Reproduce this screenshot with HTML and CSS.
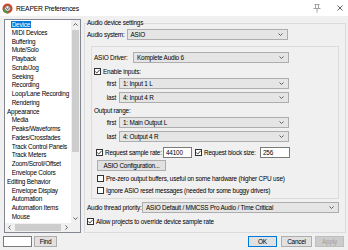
FILE: index.html
```html
<!DOCTYPE html>
<html lang="en">
<head>
    <meta charset="UTF-8">
    <title>REAPER Preferences</title>
    <link rel="stylesheet" href="styles.css">
</head>
<body>
    <div class="window">
        <div class="titlebar">
            <svg class="app-icon" width="11" height="11" viewBox="0 0 11 11">
                <circle cx="5.5" cy="5.5" r="5" fill="#d5482b"/>
                <path d="M0.6 6.4 A5 5 0 0 0 6.4 10.4 L5.5 5.5 Z" fill="#4f9a3a"/>
                <circle cx="5.5" cy="5.5" r="2.8" fill="#f4f4f4" stroke="#555" stroke-width="0.8"/>
                <path d="M4 4.3 L5.5 6.8 L7 4.3" fill="none" stroke="#444" stroke-width="0.8"/>
            </svg>
            <span class="title">REAPER Preferences</span>
            <svg class="pin" width="8" height="9" viewBox="0 0 8 9">
                <path d="M1.5 0.5 H6.5 M2.5 0.5 V4.5 M5.5 0.5 V4.5 M0.5 4.5 H7.5 M4 4.5 V8.5" fill="none" stroke="#a0a0a0"/>
            </svg>
            <svg class="close" width="6" height="6" viewBox="0 0 6 6">
                <path d="M0.5 0.5 L5.5 5.5 M5.5 0.5 L0.5 5.5" stroke="#333" stroke-width="0.8"/>
            </svg>
        </div>

        <div class="main">
            <!-- liste -->
            <div class="tree">
                <div class="tree-items">
                    <div class="item"><span class="sel">Device</span></div>
                    <div class="item">MIDI Devices</div>
                    <div class="item">Buffering</div>
                    <div class="item">Mute/Solo</div>
                    <div class="item">Playback</div>
                    <div class="item">Scrub/Jog</div>
                    <div class="item">Seeking</div>
                    <div class="item">Recording</div>
                    <div class="item">Loop/Lane Recording</div>
                    <div class="item">Rendering</div>
                    <div class="item top">Appearance</div>
                    <div class="item">Media</div>
                    <div class="item">Peaks/Waveforms</div>
                    <div class="item">Fades/Crossfades</div>
                    <div class="item">Track Control Panels</div>
                    <div class="item">Track Meters</div>
                    <div class="item">Zoom/Scroll/Offset</div>
                    <div class="item">Envelope Colors</div>
                    <div class="item top">Editing Behavior</div>
                    <div class="item">Envelope Display</div>
                    <div class="item">Automation</div>
                    <div class="item">Automation Items</div>
                    <div class="item">Mouse</div>
                </div>
                <div class="vscroll">
                    <div class="arrow"><svg width="5" height="3"><path d="M0.5 2.5 L2.5 0.5 L4.5 2.5" fill="none" stroke="#606060"/></svg></div>
                    <div class="vtrack"><div class="vthumb"></div></div>
                    <div class="arrow"><svg width="5" height="3"><path d="M0.5 0.5 L2.5 2.5 L4.5 0.5" fill="none" stroke="#606060"/></svg></div>
                </div>
                <div class="hscroll">
                    <div class="arrow"><svg width="3" height="5"><path d="M2.5 0.5 L0.5 2.5 L2.5 4.5" fill="none" stroke="#606060"/></svg></div>
                    <div class="htrack"><div class="hthumb"></div></div>
                    <div class="arrow"><svg width="3" height="5"><path d="M0.5 0.5 L2.5 2.5 L0.5 4.5" fill="none" stroke="#606060"/></svg></div>
                </div>
                <div class="corner"></div>
            </div>

            <!-- ayarlar -->
            <fieldset class="group">
                <legend>Audio device settings</legend>

                <div class="row system-row">
                    <span class="system-label">Audio system:</span>
                    <div class="combo system-combo"><span>ASIO</span><svg width="5" height="3"><path d="M0.5 0.5 L2.5 2.5 L4.5 0.5" fill="none" stroke="#606060"/></svg></div>
                </div>

                <div class="asio">
                    <div class="row driver-row">
                        <span class="driver-label">ASIO Driver:</span>
                        <div class="combo driver-combo"><span>Komplete Audio 6</span><svg width="5" height="3"><path d="M0.5 0.5 L2.5 2.5 L4.5 0.5" fill="none" stroke="#606060"/></svg></div>
                    </div>

                    <div class="row check-row enable-row">
                        <span class="cb"><svg width="7" height="7"><path d="M1.3 3.6 L2.8 5 L5.7 1.8" fill="none" stroke="#222" stroke-width="0.9"/></svg></span>
                        <span class="cb-text">Enable inputs:</span>
                    </div>
                    <div class="row range-row gap-2">
                        <span class="range-label">first</span>
                        <div class="combo range-combo"><span>1: Input 1 L</span><svg width="5" height="3"><path d="M0.5 0.5 L2.5 2.5 L4.5 0.5" fill="none" stroke="#606060"/></svg></div>
                    </div>
                    <div class="row range-row gap-3">
                        <span class="range-label">last</span>
                        <div class="combo range-combo"><span>4: Input 4 R</span><svg width="5" height="3"><path d="M0.5 0.5 L2.5 2.5 L4.5 0.5" fill="none" stroke="#606060"/></svg></div>
                    </div>

                    <div class="row text-row output-row">Output range:</div>
                    <div class="row range-row gap-2">
                        <span class="range-label">first</span>
                        <div class="combo range-combo"><span>1: Main Output L</span><svg width="5" height="3"><path d="M0.5 0.5 L2.5 2.5 L4.5 0.5" fill="none" stroke="#606060"/></svg></div>
                    </div>
                    <div class="row range-row gap-3">
                        <span class="range-label">last</span>
                        <div class="combo range-combo"><span>4: Output 4 R</span><svg width="5" height="3"><path d="M0.5 0.5 L2.5 2.5 L4.5 0.5" fill="none" stroke="#606060"/></svg></div>
                    </div>

                    <div class="row request-row">
                        <span class="cb"><svg width="7" height="7"><path d="M1.3 3.6 L2.8 5 L5.7 1.8" fill="none" stroke="#222" stroke-width="0.9"/></svg></span>
                        <span class="rate-label">Request sample rate:</span>
                        <input class="field rate-field" type="text" value="44100">
                        <span class="cb block-cb"><svg width="7" height="7"><path d="M1.3 3.6 L2.8 5 L5.7 1.8" fill="none" stroke="#222" stroke-width="0.9"/></svg></span>
                        <span class="block-label">Request block size:</span>
                        <input class="field block-field" type="text" value="256">
                    </div>

                    <div class="row config-row">
                        <button class="btn config-btn">ASIO Configuration...</button>
                    </div>

                    <div class="row check-row option-row">
                        <span class="cb"></span>
                        <span class="cb-text">Pre-zero output buffers, useful on some hardware (higher CPU use)</span>
                    </div>
                    <div class="row check-row option-row">
                        <span class="cb"></span>
                        <span class="cb-text">Ignore ASIO reset messages (needed for some buggy drivers)</span>
                    </div>
                </div>

                <div class="row thread-row">
                    <span class="thread-label">Audio thread priority:</span>
                    <div class="combo thread-combo"><span>ASIO Default / MMCSS Pro Audio / Time Critical</span><svg width="5" height="3"><path d="M0.5 0.5 L2.5 2.5 L4.5 0.5" fill="none" stroke="#606060"/></svg></div>
                </div>
                <div class="row check-row allow-row">
                    <span class="cb"><svg width="7" height="7"><path d="M1.3 3.6 L2.8 5 L5.7 1.8" fill="none" stroke="#222" stroke-width="0.9"/></svg></span>
                    <span class="cb-text">Allow projects to override device sample rate</span>
                </div>
            </fieldset>
        </div>

        <div class="footer">
            <input class="field search-field" type="text" value="">
            <button class="btn find-btn">Find</button>
            <span class="spacer"></span>
            <button class="btn ok-btn">OK</button>
            <button class="btn cancel-btn">Cancel</button>
            <button class="btn apply-btn" disabled>Apply</button>
        </div>
    </div>
</body>
</html>
```

FILE: styles.css
```css
body {
    margin: 0;
    font-family: "Liberation Sans", Arial, sans-serif;
    font-size: 6.4px;
    letter-spacing: -0.2px;
    color: #000;
    background-color: #f0f0f0;
}

.window {
    width: 348px;
    height: 250px;
    display: flex;
    flex-direction: column;
    overflow: hidden;
}

/* Başlık çubuğu */
.titlebar {
    height: 16px;
    flex-shrink: 0;
    display: flex;
    align-items: center;
    padding-left: 2px;
    background-color: #fff;
}

.app-icon {
    margin-right: 3px;
}

.title {
    flex: 1;
    font-size: 6.8px;
}

.pin {
    margin-right: 16px;
}

.close {
    margin-right: 5px;
}

.main {
    display: flex;
    gap: 3px;
    padding: 3px 2px 0 4px;
}

/* Sol liste */
.tree {
    width: 77px;
    height: 214px;
    box-sizing: border-box;
    flex-shrink: 0;
    border: 1px solid #828790;
    background-color: #fff;
    display: grid;
    grid-template-columns: 1fr 9px;
    grid-template-rows: 1fr 9px;
}

.tree-items {
    overflow: hidden;
}

.item {
    height: 8.77px;
    line-height: 8.77px;
    padding-left: 6.7px;
    white-space: nowrap;
}

.item.top {
    padding-left: 2px;
}

.sel {
    display: inline-block;
    height: 7px;
    line-height: 7px;
    padding: 0 1px;
    margin-left: -1px;
    vertical-align: middle;
    background-color: #0078d7;
    color: #fff;
}

.vscroll {
    display: flex;
    flex-direction: column;
    background-color: #f0f0f0;
}

.hscroll {
    display: flex;
    background-color: #f0f0f0;
}

.arrow {
    width: 9px;
    height: 9px;
    flex-shrink: 0;
    display: flex;
    align-items: center;
    justify-content: center;
}

.vtrack {
    flex: 1;
    padding: 1px 1px 0;
}

.vthumb {
    height: 122px;
    background-color: #cdcdcd;
}

.htrack {
    flex: 1;
    padding: 1px 1px;
}

.hthumb {
    height: 100%;
    background-color: #cdcdcd;
}

.corner {
    background-color: #f0f0f0;
}

/* Sağ grup kutusu */
.group {
    flex: 1;
    min-width: 0;
    margin: 0;
    padding: 0 2px;
    border: 1px solid #dcdcdc;
}

.group legend {
    padding: 0;
    line-height: 8px;
}

.row {
    display: flex;
    align-items: center;
    height: 11px;
    white-space: nowrap;
}

.check-row,
.text-row {
    height: 9px;
}

.combo {
    height: 11px;
    box-sizing: border-box;
    display: flex;
    align-items: center;
    justify-content: space-between;
    padding: 0 4px 0 3px;
    border: 1px solid #adadad;
    background-color: #e5e5e5;
}

.system-row {
    width: 201px;
    margin-top: 2px;
}

.system-label {
    flex-shrink: 0;
    margin-right: 2px;
}

.system-combo {
    flex: 1;
}

.asio {
    width: 248px;
    box-sizing: border-box;
    margin: 6px 0 0 4px;
    padding: 5px 0 3px 1px;
    border: 1px solid #dcdcdc;
}

.driver-label {
    width: 39px;
    margin-left: 1px;
}

.driver-combo {
    width: 156px;
}

.cb {
    width: 7px;
    height: 7px;
    box-sizing: border-box;
    flex-shrink: 0;
    border: 1px solid #333;
    background-color: #fff;
    display: flex;
}

.cb svg {
    margin: -1px;
}

.cb-text {
    margin-left: 2px;
}

.enable-row {
    margin-top: 3px;
    margin-left: 1px;
    height: 10px;
}

.gap-2 {
    margin-top: 2px;
}

.gap-3 {
    margin-top: 3px;
}

.range-label {
    width: 23px;
    margin-right: 3px;
    text-align: right;
}

.range-combo {
    width: 170px;
}

.output-row {
    margin-top: 3px;
    padding-left: 1px;
}

.request-row {
    margin-top: 5px;
    padding-left: 3px;
}

.rate-label {
    width: 58px;
    margin-left: 2px;
}

.field {
    height: 11px;
    box-sizing: border-box;
    margin: 0;
    padding: 0 2px;
    border: 1px solid #7a7a7a;
    background-color: #fff;
    font-family: inherit;
    font-size: 6.4px;
    letter-spacing: -0.2px;
    color: #000;
}

.rate-field {
    width: 29px;
}

.block-cb {
    margin-left: 3px;
}

.block-label {
    width: 56px;
    margin-left: 2px;
}

.block-field {
    width: 30px;
}

.config-row {
    margin-top: 2px;
    padding-left: 4px;
}

.btn {
    height: 11px;
    box-sizing: border-box;
    margin: 0;
    padding: 0;
    border: 1px solid #adadad;
    background-color: #e1e1e1;
    font-family: inherit;
    font-size: 6.4px;
    letter-spacing: -0.2px;
    color: #000;
}

.config-btn {
    width: 69px;
}

.option-row {
    margin-top: 3px;
    padding-left: 4px;
}

.thread-row {
    margin-top: 3px;
}

.thread-label {
    width: 55px;
}

.thread-combo {
    width: 197px;
}

.allow-row {
    margin-top: 4px;
}

/* Alt çubuk */
.footer {
    display: flex;
    align-items: center;
    padding: 3px 4px 0 3px;
}

.search-field {
    width: 29px;
}

.find-btn {
    width: 23px;
    margin-left: 2px;
}

.spacer {
    flex: 1;
}

.ok-btn {
    width: 29px;
    border-color: #0078d7;
}

.cancel-btn {
    width: 31px;
    margin-left: 4px;
}

.apply-btn {
    width: 29px;
    margin-left: 3px;
    color: #a0a0a0;
    background-color: #cccccc;
    border-color: #bfbfbf;
}
```
